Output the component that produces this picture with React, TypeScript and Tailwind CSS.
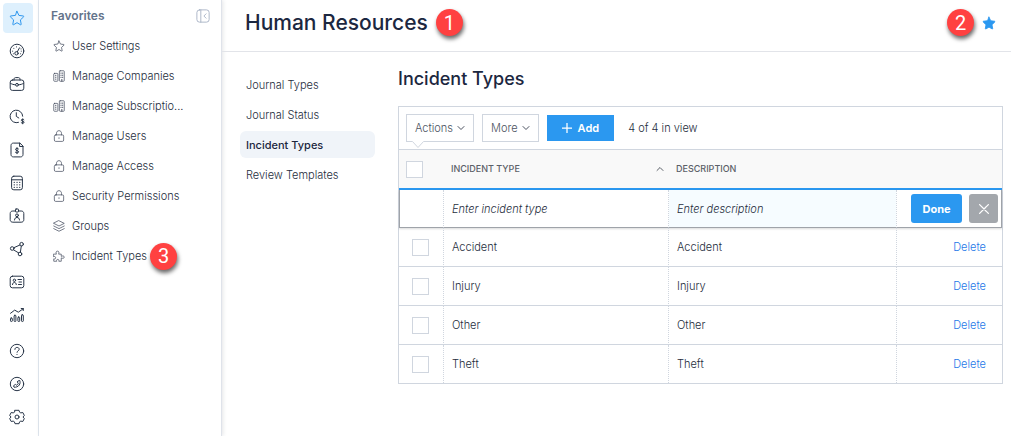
import { useState } from 'react';
import type { ReactNode } from 'react';

interface IconProps {
  children: ReactNode;
  className?: string;
}

function Icon({ children, className = 'size-4' }: IconProps) {
  return (
    <svg
      viewBox="0 0 16 16"
      className={className}
      fill="none"
      stroke="currentColor"
      strokeLinecap="round"
      strokeLinejoin="round"
      aria-hidden="true"
    >
      {children}
    </svg>
  );
}

const STAR = 'M8 1.3l1.9 4.1 4.5.6c.4.1.5.5.3.8l-3.3 3.1.8 4.4c.1.4-.3.7-.6.5L8 12.7l-3.6 2.1c-.3.2-.7-.1-.6-.5l.8-4.4L1.3 6.8c-.2-.3-.1-.7.3-.8l4.5-.6z';

const railIcons = [
  { label: 'Favorites', icon: <path d={STAR} /> },
  {
    label: 'Dashboard',
    icon: (
      <>
        <circle cx="8" cy="8" r="6.8" />
        <circle cx="7.5" cy="10.3" r="1.7" />
        <path d="M8.3 8.8l2.2-4M3.6 8.2h.1M4.8 5.4h.1M7.4 3.9h.1M12.2 8.2h.1M12 5.9h.1M4.3 10.8h.1M11.6 10.8h.1" />
      </>
    ),
  },
  {
    label: 'Jobs',
    icon: (
      <>
        <rect x="1.2" y="4" width="13.6" height="10.4" rx="2.2" />
        <path d="M5 4V3.2C5 2.3 5.6 1.6 6.5 1.6h3c.9 0 1.5.7 1.5 1.6V4M1.4 7.2c1.4 1 3 1.5 5 1.6M14.6 7.2c-1.4 1-3 1.5-5 1.6" />
        <circle cx="8" cy="8.8" r="1.4" />
      </>
    ),
  },
  {
    label: 'Time and pay',
    icon: (
      <>
        <path d="M9.500 13.400A6.300 6.300 0 1 1 13.700 7.200M7.300 3.700v3.700l2.500 1.600" />
        <path d="M15 10.700c-.4-.7-2.700-.8-2.700.5s2.800.7 2.800 2c0 1.300-2.400 1.200-3 .4M13.700 10v4.800" />
      </>
    ),
  },
  {
    label: 'Invoices',
    icon: (
      <>
        <path d="M10.600 1.100H4.400C3 1.100 2 2.100 2 3.500v9C2 13.900 3 14.900 4.400 14.900h7.200c1.400 0 2.400-1 2.400-2.400V4.500zM10.600 1.100v3.400H14" />
        <path d="M9.500 6.900c-.7-.8-3-.8-3 .6s3.100.8 3.100 2.300c0 1.400-2.400 1.400-3.200.5M8 5.600v6.100" />
      </>
    ),
  },
  {
    label: 'Payroll',
    icon: (
      <>
        <rect x="2.600" y="1.200" width="10.800" height="13.600" rx="2.200" />
        <path d="M2.800 4.800h10.400" />
        <path strokeWidth="1.300" d="M5.200 7.300h.1M8 7.300h.1M10.700 7.300h.1M5.200 9.800h.1M8 9.800h.1M10.700 9.800h.1M5.200 12.300h.1M8 12.300h.1M10.700 12.300h.1" />
      </>
    ),
  },
  {
    label: 'Human resources',
    icon: (
      <>
        <path d="M6.500 3H3.800C2.200 3 1.200 4 1.200 5.500v6.200c0 1.500 1 2.500 2.600 2.500h8.400c1.600 0 2.600-1 2.600-2.500V5.500C14.800 4 13.800 3 12.200 3H9.500" />
        <rect x="6.500" y="1" width="3" height="3" rx=".6" />
        <circle cx="8" cy="7.300" r="1.400" />
        <path d="M5.500 12c.1-1.700 1-2.500 2.500-2.500s2.400.8 2.500 2.500" />
      </>
    ),
  },
  {
    label: 'Workflow',
    icon: (
      <>
        <circle cx="3.200" cy="7.500" r="1.800" />
        <circle cx="12.600" cy="3.200" r="1.800" />
        <circle cx="11" cy="13" r="1.800" />
        <path d="M4.900 6.700l6-2.700M4.500 8.800l5.100 3.100M12.300 5l-.9 6.200" />
      </>
    ),
  },
  {
    label: 'Contacts',
    icon: (
      <>
        <rect x="1.200" y="2.200" width="13.600" height="11.600" rx="2.200" />
        <circle cx="5.400" cy="6.300" r="1.200" />
        <path d="M3.500 10.600c.1-1.400.8-2.100 1.900-2.100s1.800.7 1.900 2.100M9 5.500h3.500M10 8h2.500M9.500 10.500h3" />
      </>
    ),
  },
  {
    label: 'Reports',
    icon: (
      <>
        <path d="M1.500 6.300l4.200-3.200 3.600 2.100L14.300 1.700M12.200 1.500l2.200.1-.2 2" />
        <rect x="1.500" y="11" width="1.800" height="3.500" rx=".7" />
        <rect x="5.100" y="8.300" width="1.800" height="6.200" rx=".7" />
        <rect x="8.900" y="10" width="1.800" height="4.500" rx=".7" />
        <rect x="12.500" y="7.800" width="1.800" height="6.700" rx=".7" />
      </>
    ),
  },
];

const railFooter = [
  {
    label: 'Help',
    icon: (
      <>
        <circle cx="8" cy="8" r="6.700" />
        <path d="M5.900 6.400c0-1.300.9-2 2.100-2s2.200.7 2.200 1.900c0 1.500-2.200 1.500-2.200 3M8 11.500v.1" />
      </>
    ),
  },
  {
    label: 'Call support',
    icon: (
      <>
        <circle cx="8" cy="8" r="6.700" />
        <path d="M9.300 4.900l1.500-.4c.4 1.400.5 3-.5 4.500-1.200 1.800-3.400 2.400-5.300 2.200l-.4-1.500 1.800-1.300 1 .8c1-.3 1.600-.9 1.900-1.900l-.8-1z" />
      </>
    ),
  },
  {
    label: 'Settings',
    icon: (
      <>
        <path d="M6 1.300h4l.6 1.900 1.200.7 2-.4 1.500 2.900L14 8l1.300 1.600-1.500 2.900-2-.4-1.200.7-.6 1.900H6l-.6-1.900-1.200-.7-2 .4L.7 9.600 2 8 .7 6.400l1.500-2.900 2 .4 1.200-.7z" />
        <circle cx="8" cy="8" r="2" />
      </>
    ),
  },
];

const buildingIcon = (
  <>
    <rect x="1" y="4.500" width="5.500" height="10.500" rx="1" />
    <rect x="8.500" y="1" width="6.500" height="14" rx="1" />
    <path strokeWidth="1.300" d="M3.700 7v.5M3.700 9.500v.5M3.700 12v.5M10.700 4v.5M12.900 4v.5M10.700 6.800v.5M12.900 6.800v.5M10.700 9.600v.5M12.900 9.600v.5M11.800 12.500V15" />
  </>
);

const lockIcon = (
  <>
    <rect x="1.800" y="6.500" width="12.400" height="8.700" rx="1.800" />
    <path d="M4.700 6.500V4.300C4.700 2.300 6 .9 8 .9s3.300 1.400 3.300 3.400v2.200M8 10.300v1" />
  </>
);

const favorites = [
  { label: 'User Settings', icon: <path d={STAR} /> },
  { label: 'Manage Companies', icon: buildingIcon },
  { label: 'Manage Subscriptio...', icon: buildingIcon },
  { label: 'Manage Users', icon: lockIcon },
  { label: 'Manage Access', icon: lockIcon },
  { label: 'Security Permissions', icon: lockIcon },
  {
    label: 'Groups',
    icon: <path d="M8 1l7 3.500-7 3.500-7-3.500zM1 8l7 3.500L15 8M1 11.500L8 15l7-3.500" />,
  },
  {
    label: 'Incident Types',
    badge: 3,
    icon: (
      <path d="M1 5.500h3.500C3.600 3.500 4 1.500 6 1.500s2.400 2 1.500 4H11v3c1.700-1 4-.8 4 1s-2.300 2-4 1V15H7.700c.5-1.500 0-2.500-1.400-2.500S4.400 13.500 5 15H1v-3.200c1.500.5 2.500 0 2.500-1.500S2.500 8.200 1 8.700z" />
    ),
  },
];

const sections = ['Journal Types', 'Journal Status', 'Incident Types', 'Review Templates'];

const rows = [
  { type: 'Accident', description: 'Accident' },
  { type: 'Injury', description: 'Injury' },
  { type: 'Other', description: 'Other' },
  { type: 'Theft', description: 'Theft' },
];

function Badge({ value }: { value: number }) {
  return (
    <span className="flex size-[27px] shrink-0 items-center justify-center rounded-full bg-[#ff4141] font-[Roboto,sans-serif] text-xl leading-none font-normal text-white shadow-[1px_3px_4px_rgba(0,0,0,0.6)]">
      {value}
    </span>
  );
}

function RailButton({ label, icon, active }: { label: string; icon: ReactNode; active?: boolean }) {
  return (
    <button
      type="button"
      aria-label={label}
      className={`flex size-[30px] items-center justify-center rounded pr-[2px] ${active ? 'bg-[#def0fd] text-[#2f97ee]' : 'text-[#283548]'}`}
    >
      <Icon>{icon}</Icon>
    </button>
  );
}

function Checkbox({ label }: { label: string }) {
  return (
    <input
      type="checkbox"
      aria-label={label}
      className="block size-[17px] appearance-none border border-[#d0d6df] bg-white checked:bg-[#2b98f0]"
    />
  );
}

function Chevron({ up }: { up?: boolean }) {
  return (
    <Icon className="size-2">
      <path strokeWidth="2" d={up ? 'M2 11l6-6 6 6' : 'M2 5l6 6 6-6'} />
    </Icon>
  );
}

export default function App() {
  const [section, setSection] = useState('Incident Types');

  return (
    <div className="flex min-h-screen bg-white font-[Inter,sans-serif] text-[11px] leading-4 font-light text-[#252d3c]">
      <nav aria-label="Modules" className="flex w-[39px] shrink-0 flex-col gap-[3px] border-r border-[#e2e8f0] px-[3px] pt-[3px]">
        {railIcons.map((item, index) => (
          <RailButton key={item.label} {...item} active={index === 0} />
        ))}
        <div className="flex flex-col gap-[3px] pt-[3px]">
          {railFooter.map((item) => (
            <RailButton key={item.label} {...item} />
          ))}
        </div>
      </nav>

      <aside className="w-[183px] shrink-0 border-r border-[#dfe3ea] shadow-[1px_0_4px_rgba(30,41,59,0.12)]">
        <div className="flex h-8 items-center justify-between pr-[11px] pl-3">
          <h2 className="text-xs font-semibold text-[#64748b]">Favorites</h2>
          <button type="button" aria-label="Collapse favorites" className="text-[#a3afc2]">
            <Icon className="size-[14px]">
              <rect x="1" y="1" width="14" height="14" rx="3" />
              <path d="M5.500 1v14M11.500 5.500L9 8l2.500 2.500" />
            </Icon>
          </button>
        </div>
        <ul className="flex flex-col gap-[2px]">
          {favorites.map((item) => (
            <li key={item.label} className="flex h-7 items-center gap-[3px] pl-[14px]">
              <a href="#" className="flex items-center gap-[7px] whitespace-nowrap">
                <Icon className="size-3 shrink-0 text-[#4a5163]">{item.icon}</Icon>
                {item.label}
              </a>
              {item.badge && <Badge value={item.badge} />}
            </li>
          ))}
        </ul>
      </aside>

      <main className="min-w-0 flex-1">
        <header className="flex h-[52px] items-center justify-between border-b border-[#e2e4e9] pr-[15px] pb-[6px] pl-[23px]">
          <div className="flex items-center gap-2">
            <h1 className="text-[21px] font-medium text-[#1c2740]">Human Resources</h1>
            <Badge value={1} />
          </div>
          <div className="flex items-center gap-2">
            <Badge value={2} />
            <button type="button" aria-label="Remove from favorites" className="text-[#2b98f0]">
              <Icon className="size-[14px]">
                <path fill="currentColor" d={STAR} />
              </Icon>
            </button>
          </div>
        </header>

        <div className="flex gap-[23px] pt-[17px] pr-2 pl-[18px]">
          <nav aria-label="Sections" className="flex w-[135px] shrink-0 flex-col gap-[3px] pt-[2px]">
            {sections.map((name) => (
              <a
                key={name}
                href="#"
                onClick={() => setSection(name)}
                className={`flex h-[27px] items-center rounded-md px-[6px] ${name === section ? 'bg-[#f0f4f9] font-medium text-[#1c2740]' : ''}`}
              >
                {name}
              </a>
            ))}
          </nav>

          <section className="min-w-0 flex-1">
            <h2 className="mb-[17px] text-lg leading-5 font-medium text-[#1c2740]">Incident Types</h2>

            <div className="border border-[#d0d6df]">
              <div className="flex h-[42px] items-center gap-2 px-[7px]">
                <button type="button" className="relative flex h-7 items-center gap-1 border border-[#d0d6df] px-2 text-[#4b5260]">
                  Actions
                  <Chevron />
                  <svg viewBox="0 0 14 8" className="absolute top-[26px] left-1 h-2 w-[14px]" aria-hidden="true">
                    <path d="M1 0l6 6.500L13 0" fill="#fff" stroke="#d0d6df" />
                    <path d="M1.500 0h11" stroke="#fff" />
                  </svg>
                </button>
                <button type="button" className="flex h-7 items-center gap-1 border border-[#d0d6df] px-2 text-[#4b5260]">
                  More
                  <Chevron />
                </button>
                <button type="button" className="flex h-[26px] items-center gap-[6px] bg-[#2b98f0] px-[15px] font-semibold text-white">
                  <Icon className="size-[10px]">
                    <path strokeWidth="2" d="M8 0v16M0 8h16" />
                  </Icon>
                  Add
                </button>
                <span className="ml-[6px]">4 of 4 in view</span>
              </div>

              <table className="w-full table-fixed border-separate border-spacing-0 text-left">
                <colgroup>
                  <col className="w-[45px]" />
                  <col />
                  <col className="w-[228px]" />
                  <col className="w-[105px]" />
                </colgroup>
                <thead className="bg-[#f9f9f9] text-[9px] text-[#5b6068]">
                  <tr className="h-[41px]">
                    <th className="border-t border-b-2 border-t-[#d0d6df] border-b-[#2b98f0] pl-[7px]">
                      <Checkbox label="Select all" />
                    </th>
                    <th className="border-t border-b-2 border-t-[#d0d6df] border-b-[#2b98f0] pr-[5px] pl-[7px] font-medium">
                      <div className="flex items-center justify-between">
                        INCIDENT TYPE
                        <Chevron up />
                      </div>
                    </th>
                    <th className="border-t border-b-2 border-t-[#d0d6df] border-b-[#2b98f0] pl-[7px] font-medium">DESCRIPTION</th>
                    <th className="border-t border-b-2 border-t-[#d0d6df] border-b-[#2b98f0]" aria-label="Row actions" />
                  </tr>
                </thead>
                <tbody>
                  <tr className="h-[38px] shadow-[0_1px_2px_rgba(0,0,0,0.15)]">
                    <td className="border-r border-b border-l border-r-[#d0d6df] border-b-[#9fa3a9] border-l-[#9fa3a9] [border-right-style:dotted]" />
                    <td className="border-r border-b border-r-[#d0d6df] border-b-[#9fa3a9] p-0 [border-right-style:dotted]">
                      <input
                        type="text"
                        aria-label="Incident type"
                        placeholder="Enter incident type"
                        className="block h-[37px] w-full px-2 italic placeholder:text-[#252d3c] focus:outline-none"
                      />
                    </td>
                    <td className="border-r border-b border-r-[#d0d6df] border-b-[#9fa3a9] p-0 [border-right-style:dotted]">
                      <input
                        type="text"
                        aria-label="Description"
                        placeholder="Enter description"
                        className="block h-[37px] w-full bg-[#f6fcff] px-2 italic placeholder:text-[#252d3c] focus:outline-none"
                      />
                    </td>
                    <td className="border-r border-b border-[#9fa3a9] py-0 pr-[3px]">
                      <div className="flex justify-end gap-[7px]">
                        <button type="button" className="h-[29px] w-[51px] rounded-[3px] bg-[#2b98f0] font-bold text-white">
                          Done
                        </button>
                        <button type="button" aria-label="Cancel" className="flex size-[29px] items-center justify-center rounded-[3px] bg-[#a3a7ac] text-white">
                          <Icon className="size-[10px]">
                            <path strokeWidth="2" d="M1 1l14 14M15 1L1 15" />
                          </Icon>
                        </button>
                      </div>
                    </td>
                  </tr>
                  {rows.map((row) => (
                    <tr key={row.type} className="group h-[39px] last:h-[38px]">
                      <td className="border-r border-b border-[#d0d6df] pl-[13px] group-last:border-b-0 [border-right-style:dotted]">
                        <Checkbox label={`Select ${row.type}`} />
                      </td>
                      <td className="border-r border-b border-[#d0d6df] px-2 group-last:border-b-0 [border-right-style:dotted]">{row.type}</td>
                      <td className="border-r border-b border-[#d0d6df] px-2 group-last:border-b-0 [border-right-style:dotted]">{row.description}</td>
                      <td className="border-b border-[#d0d6df] pr-4 text-right group-last:border-b-0">
                        <a href="#" className="text-[#2477e8]">
                          Delete
                        </a>
                      </td>
                    </tr>
                  ))}
                </tbody>
              </table>
            </div>
          </section>
        </div>
      </main>
    </div>
  );
}
